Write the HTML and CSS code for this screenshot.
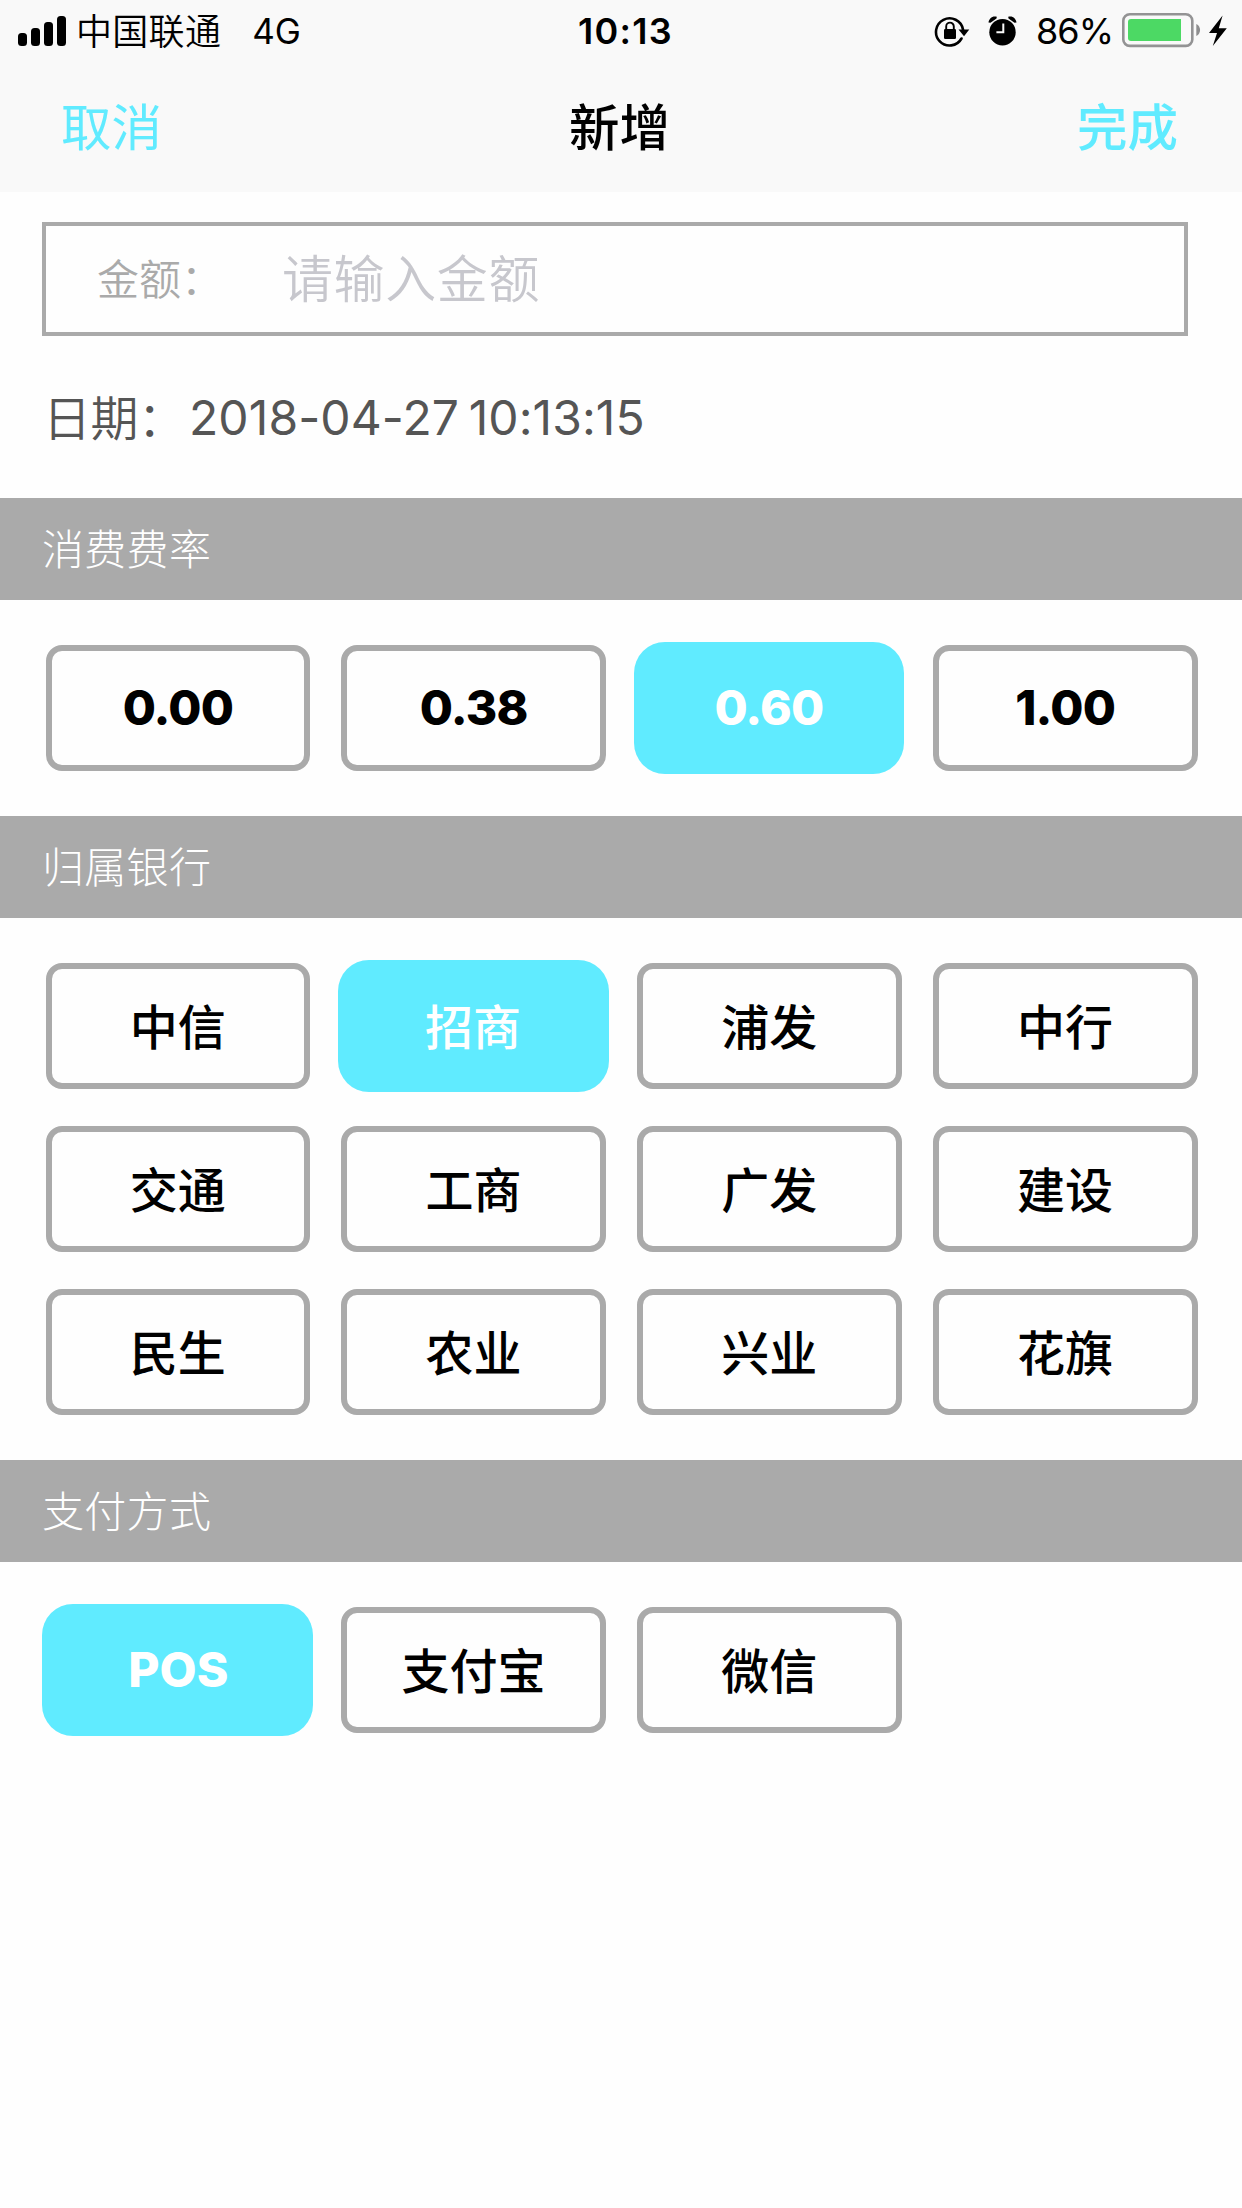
FILE: index.html
```html
<!DOCTYPE html>
<html lang="zh-CN">
<head>
<meta charset="utf-8">
<title>新增</title>
<link rel="stylesheet" href="styles.css">
</head>
<body>
<div class="screen">
  <header class="header">
    <div class="status">
      <div class="status-left">
        <svg class="signal" width="48" height="32" viewBox="0 0 48 32"><rect x="0" y="18" width="9" height="13" rx="3.5"/><rect x="13" y="13" width="9" height="18" rx="3.5"/><rect x="26" y="7" width="9" height="24" rx="3.5"/><rect x="39" y="1" width="9" height="30" rx="3.5"/></svg>
        <span class="carrier">中国联通</span>
        <span class="network">4G</span>
      </div>
      <span class="clock">10:13</span>
      <div class="status-right">
        <svg class="lock" width="36" height="34" viewBox="0 0 36 34">
          <path d="M27.5 24.5A13.6 13.6 0 1 1 29 15.5" fill="none" stroke="#000" stroke-width="2.6" stroke-linecap="round"/>
          <path d="M24.5 15.5h10.8l-5.3 6.8z"/>
          <rect x="10" y="15" width="12" height="10" rx="1.2"/>
          <path d="M12.2 16v-3.6a3.8 3.8 0 0 1 7.6 0V16" fill="none" stroke="#000" stroke-width="1.9"/>
        </svg>
        <svg class="alarm" width="30" height="32" viewBox="0 0 30 32">
          <circle cx="14.5" cy="17.2" r="13.2"/>
          <path d="M.5 7.5C1 3.5 4.5.4 8.8 1.8L8.5 3.5 2.5 7.8zM28.5 7.5C28 3.5 24.5.4 20.2 1.8L20.5 3.5 26.5 7.8z"/>
          <path d="M15.3 8.5v8.7H8.4" fill="none" stroke="#f9f9f9" stroke-width="2"/>
        </svg>
        <span class="percent">86%</span>
        <svg class="battery" width="80" height="36" viewBox="0 0 80 36">
          <rect x="1.3" y="1.3" width="69" height="31.6" rx="6.5" fill="none" stroke="#939394" stroke-width="2.6"/>
          <rect x="6" y="6" width="53" height="22" rx="3" fill="#4cd964"/><rect x="54" y="6" width="5" height="22" fill="#4cd964"/>
          <path d="M74.3 11c5 2 5 10 0 12z" fill="#8e8e8f"/>
        </svg>
        <svg class="bolt" width="18" height="32" viewBox="0 0 18 32"><path d="M13.6.5 0 18h8L3.8 31 17.8 13.2H9.8z"/></svg>
      </div>
    </div>
    <nav class="nav">
      <span class="nav-action">取消</span>
      <h1 class="nav-title">新增</h1>
      <span class="nav-action nav-done">完成</span>
    </nav>
  </header>

  <div class="amount">
    <span class="amount-label">金额：</span>
    <span class="amount-placeholder">请输入金额</span>
  </div>
  <div class="date"><span class="date-label">日期：</span><span class="date-value">2018-04-27 10:13:15</span></div>

  <h2 class="section">消费费率</h2>
  <div class="options">
    <div class="cell number">0.00</div>
    <div class="cell number">0.38</div>
    <div class="cell number selected">0.60</div>
    <div class="cell number">1.00</div>
  </div>

  <h2 class="section">归属银行</h2>
  <div class="options">
    <div class="cell">中信</div>
    <div class="cell selected">招商</div>
    <div class="cell">浦发</div>
    <div class="cell">中行</div>
    <div class="cell">交通</div>
    <div class="cell">工商</div>
    <div class="cell">广发</div>
    <div class="cell">建设</div>
    <div class="cell">民生</div>
    <div class="cell">农业</div>
    <div class="cell">兴业</div>
    <div class="cell">花旗</div>
  </div>

  <h2 class="section">支付方式</h2>
  <div class="options">
    <div class="cell number selected pos">POS</div>
    <div class="cell">支付宝</div>
    <div class="cell">微信</div>
  </div>
</div>
</body>
</html>
```
FILE: styles.css
```css
* { box-sizing: border-box; }
body {
  margin: 0;
  background: #fff;
  color: #000;
  font-family: Inter, "Noto Sans CJK SC", sans-serif;
}
.screen { width: 1242px; height: 2208px; overflow: hidden; background: #fefefe; }
.screen svg { display: block; flex: none; }

.header { height: 192px; background: #f9f9f9; }
.status {
  display: grid;
  grid-template-columns: 1fr auto 1fr;
  align-items: center;
  height: 62px;
  padding: 0 15px 0 18px;
  font-size: 36px;
  line-height: 62px;
}
.status-left, .status-right { display: flex; align-items: center; }
.status-right { justify-content: flex-end; }
.carrier { margin-left: 10px; padding-top: 2px; line-height: 60px; font-weight: 350; letter-spacing: .3px; }
.network { margin-left: 31px; font-size: 35px; }
.clock { padding-left: 6px; font-weight: 600; letter-spacing: 1.3px; }
.alarm { margin-left: 18px; }
.percent { margin: 0 9px 0 18px; letter-spacing: -1px; }
.bolt { margin-left: 7px; }

.nav {
  display: grid;
  grid-template-columns: 1fr auto 1fr;
  align-items: center;
  height: 130px;
  padding: 2px 64px 0 61px;
  font-size: 50.5px;
  line-height: 128px;
}
.nav-action { color: #60ebff; }
.nav-title { margin: 0; font-size: 50.5px; font-weight: 500; }
.nav-done { text-align: right; font-weight: 500; }

.amount {
  display: flex;
  align-items: center;
  width: 1146px;
  height: 114px;
  margin: 30px 0 0 42px;
  padding: 0 0 7px 51px;
  border: 4px solid #aaa;
}
.amount-label { width: 185px; padding-top: 2px; color: #aaa; font-size: 42px; font-weight: 350; }
.amount-placeholder { color: #c7c7cd; font-size: 51px; font-weight: 350; letter-spacing: .6px; }

.date {
  display: flex;
  align-items: center;
  height: 162px;
  padding-left: 43px;
  color: #555;
  font-size: 48px;
}
.date-label { width: 146px; padding-bottom: 4px; font-weight: 350; letter-spacing: -.6px; }
.date-value { letter-spacing: .1px; word-spacing: -4px; }

.section {
  height: 102px;
  margin: 0;
  padding: 2px 0 0 42px;
  background: #aaa;
  color: #fff;
  font-size: 42px;
  font-weight: 300;
  line-height: 100px;
  letter-spacing: .3px;
}
.options {
  display: grid;
  grid-template-columns: repeat(4, 1fr);
  grid-auto-rows: 131.5px;
  gap: 31.5px 25px;
  padding: 42px 42px 42.5px;
}
.cell {
  display: flex;
  align-items: center;
  justify-content: center;
  margin: 3px 2.5px 3px 3.5px;
  padding-bottom: 4px;
  border: 6px solid #aaa;
  border-radius: 16px;
  font-size: 48px;
  font-weight: 500;
}
.number { padding: 0; font-weight: 800; letter-spacing: -.8px; }
.pos { padding-left: 2px; letter-spacing: 0; }
.selected {
  margin: 0;
  border: 0;
  border-radius: 31px;
  background: #60ebff;
  color: #fff;
}
```
